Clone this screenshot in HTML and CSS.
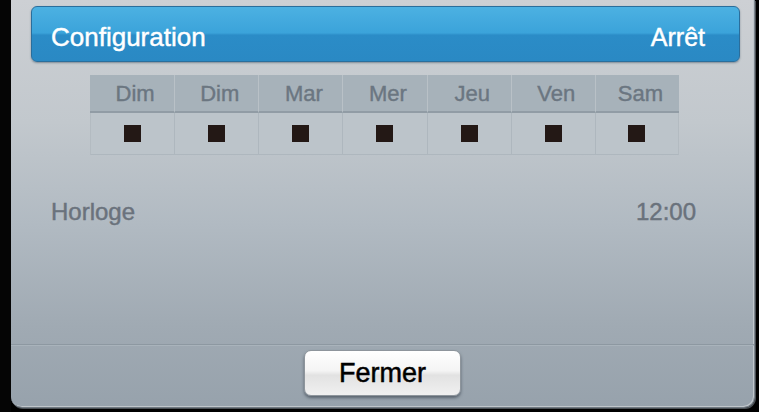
FILE: index.html
```html
<!DOCTYPE html>
<html>
<head>
<meta charset="utf-8">
<link rel="stylesheet" href="styles.css">
</head>
<body>
<div class="screen">
  <div class="strip"></div>
  <div class="panel">
    <div class="bar">
      <span class="bar-label">Configuration</span>
      <span class="bar-value">Arrêt</span>
    </div>
    <div class="days">
      <div class="day-head">Dim</div>
      <div class="day-head">Dim</div>
      <div class="day-head">Mar</div>
      <div class="day-head">Mer</div>
      <div class="day-head">Jeu</div>
      <div class="day-head">Ven</div>
      <div class="day-head">Sam</div>
      <div class="day-cell"><span class="box"></span></div>
      <div class="day-cell"><span class="box"></span></div>
      <div class="day-cell"><span class="box"></span></div>
      <div class="day-cell"><span class="box"></span></div>
      <div class="day-cell"><span class="box"></span></div>
      <div class="day-cell"><span class="box"></span></div>
      <div class="day-cell"><span class="box"></span></div>
    </div>
    <div class="clock-row">
      <span>Horloge</span>
      <span>12:00</span>
    </div>
    <div class="footer">
      <button class="close">Fermer</button>
    </div>
  </div>
</div>
</body>
</html>
```

FILE: styles.css
```css
html, body {
  margin: 0;
  padding: 0;
  background: #000;
}
body {
  width: 759px;
  height: 412px;
  overflow: hidden;
  font-family: "Liberation Sans", Arial, sans-serif;
}
.screen {
  display: flex;
  height: 412px;
}
.strip {
  width: 11px;
  flex: none;
  background: #050505;
}
.panel {
  width: 744px;
  height: 408px;
  box-sizing: border-box;
  flex: none;
  display: flex;
  flex-direction: column;
  padding: 6px 14px 0 20px;
  background: linear-gradient(to bottom, #cdd0d4 0%, #c2c8cd 30%, #b1bac2 55%, #a0aab3 80%, #97a2ac 100%);
  border-right: 1px solid #7d868e;
  border-bottom: 1px solid #6f7880;
  border-radius: 0 0 11px 11px;
  box-shadow: inset -1px -1px 0 #c0c6cb, 1px 1px 0 #4a4f54;
}
.bar {
  height: 56px;
  box-sizing: border-box;
  display: flex;
  justify-content: space-between;
  align-items: center;
  padding: 6px 34px 0 19px;
  border: 1px solid #2a6e9c;
  border-radius: 6px;
  background: linear-gradient(to bottom, #4cb1e2 0%, #3ba3da 48%, #2b8cc7 52%, #2a89c4 100%);
  box-shadow: 0 1px 2px rgba(40, 60, 80, 0.45);
  color: #fff;
  font-size: 25px;
  -webkit-text-stroke: 0.45px #fff;
}
.bar-label {
  font-size: 26px;
}
.days {
  margin: 13px 0 0 59px;
  width: 589px;
  display: grid;
  grid-template-columns: repeat(7, 1fr);
  grid-template-rows: 38px 42px;
}
.day-head {
  background: #a7b2ba;
  color: #6b7681;
  font-size: 22px;
  -webkit-text-stroke: 0.4px #6b7681;
  display: flex;
  align-items: center;
  justify-content: center;
  padding: 2px 0 0 6px;
  border-left: 1px solid #b9c1c7;
  border-bottom: 2px solid #919ca5;
}
.day-head:first-child {
  border-left: none;
}
.day-cell {
  background: #bcc4ca;
  display: flex;
  align-items: center;
  justify-content: center;
  border-left: 1px solid #aeb7be;
  border-bottom: 1px solid #aeb7be;
}
.day-cell:nth-child(8) {
  border-left: 1px solid #b3bbc1;
}
.day-cell:last-child {
  border-right: 1px solid #b3bbc1;
}
.box {
  width: 17px;
  height: 17px;
  background: #231815;
}
.clock-row {
  margin-top: 43px;
  display: flex;
  justify-content: space-between;
  padding: 0 44px 0 20px;
  color: #6a727c;
  font-size: 24px;
  -webkit-text-stroke: 0.45px #6a727c;
}
.footer {
  margin-top: auto;
  margin-left: -20px;
  margin-right: -14px;
  height: 63px;
  border-top: 1px solid #8d98a1;
  box-shadow: inset 0 1px 0 #a9b3bb;
  display: flex;
  justify-content: center;
  padding-top: 5px;
  box-sizing: border-box;
}
.close {
  width: 157px;
  height: 46px;
  border: 1px solid #8e959c;
  border-radius: 7px;
  background: linear-gradient(to bottom, #ffffff 0%, #f4f4f4 45%, #e2e2e2 55%, #f0f0f0 100%);
  box-shadow: 0 2px 3px rgba(40, 50, 60, 0.55);
  font-family: "Liberation Sans", Arial, sans-serif;
  font-size: 27px;
  -webkit-text-stroke: 0.5px #000;
  color: #000;
  padding: 0;
}
```
